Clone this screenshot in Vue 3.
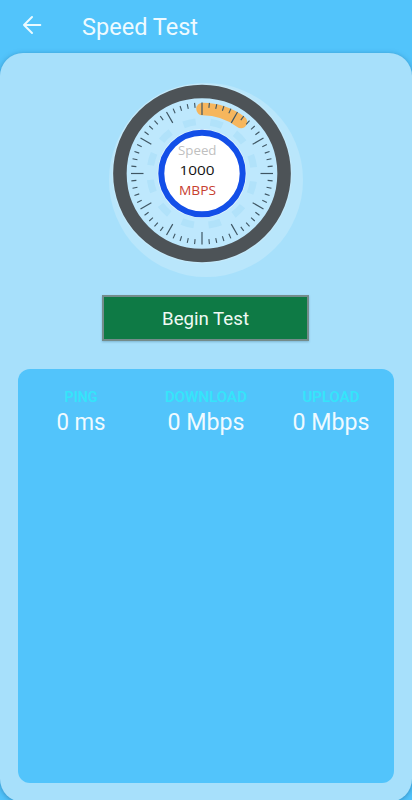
<script setup>
const ticks = Array.from({ length: 60 }, (_, i) => ({ angle: i * 6, major: i % 5 === 0 }))
const stats = [
  { label: 'PING', value: '0 ms', labelWidth: 33, valueWidth: 49 },
  { label: 'DOWNLOAD', value: '0 Mbps', labelWidth: 82, valueWidth: 77 },
  { label: 'UPLOAD', value: '0 Mbps', labelWidth: 57, valueWidth: 77 },
]
</script>

<template>
  <div class="screen">
    <header class="bar">
      <svg class="back" width="20" height="20" viewBox="0 0 20 20">
        <path d="M18.3 10H2M10 2L2 10l8 8" />
      </svg>
      <svg class="title" width="120" height="36" viewBox="0 0 120 36">
        <text x="0" y="26.3" textLength="116" lengthAdjust="spacingAndGlyphs">Speed Test</text>
      </svg>
    </header>
    <main class="card">
      <svg class="gauge" width="200" height="200" viewBox="106 80 200 200">
        <circle cx="206" cy="180" r="97" fill="#b9e6fb" />
        <circle cx="202" cy="173.5" r="90" fill="#c4e9fa" />
        <circle cx="202" cy="173.5" r="82.1" fill="#bee8fd" stroke="#4d5357" stroke-width="13.5" />
        <circle cx="202" cy="173.5" r="52" fill="none" stroke="#b1e2fa" stroke-width="7" stroke-dasharray="12.5 14.727" stroke-dashoffset="-8" />
        <path d="M202.5 109A64.5 64.5 0 0 1 241 122" fill="none" stroke="#f6b65d" stroke-width="12.5" stroke-linecap="round" />
        <line
          v-for="t in ticks"
          :key="t.angle"
          x1="202"
          x2="202"
          y1="102.5"
          :y2="t.major ? 115 : 107.5"
          :transform="`rotate(${t.angle} 202 173.5)`"
          stroke="#3f5663"
          :stroke-width="t.major ? 1.2 : 1.1"
        />
        <circle cx="202" cy="173.5" r="44.5" fill="#e4f4fd" />
        <circle cx="202" cy="173.5" r="40.7" fill="#fff" stroke="#134fe8" stroke-width="6" />
        <g class="reading">
          <text x="178" y="155" textLength="38.5" lengthAdjust="spacingAndGlyphs" fill="#bfbfbf">Speed</text>
          <text x="179.5" y="175.3" textLength="35" lengthAdjust="spacingAndGlyphs" fill="#111">1000</text>
          <text x="179" y="195" textLength="37" lengthAdjust="spacingAndGlyphs" fill="#c7402f">MBPS</text>
        </g>
      </svg>
      <button class="begin">
        <svg width="90" height="30" viewBox="0 0 90 30">
          <text x="1" y="22.3" textLength="87" lengthAdjust="spacingAndGlyphs">Begin Test</text>
        </svg>
      </button>
      <section class="panel">
        <div v-for="s in stats" :key="s.label" class="stat">
          <svg width="100" height="60" viewBox="-50 0 100 60">
            <text class="label" :x="-s.labelWidth / 2" y="23" :textLength="s.labelWidth" lengthAdjust="spacingAndGlyphs">{{ s.label }}</text>
            <text class="value" :x="-s.valueWidth / 2" y="51.2" :textLength="s.valueWidth" lengthAdjust="spacingAndGlyphs">{{ s.value }}</text>
          </svg>
        </div>
      </section>
    </main>
  </div>
</template>

<style>
body {
  margin: 0;
  overflow: hidden;
}
</style>

<style scoped>
.screen {
  display: flex;
  flex-direction: column;
  width: 412px;
  height: 800px;
  overflow: hidden;
  background: #52c4fb;
  font-family: Roboto, "Open Sans", sans-serif;
}
.bar {
  display: flex;
  flex: none;
  box-sizing: border-box;
  height: 53px;
  padding: 15px 0 0 22px;
}
.back {
  fill: none;
  stroke: #eafaff;
  stroke-width: 2;
  stroke-linecap: round;
  stroke-linejoin: round;
}
.title {
  margin: -6px 0 0 40px;
  overflow: visible;
  font-size: 24px;
  fill: #eefaff;
}
.card {
  display: flex;
  flex: none;
  flex-direction: column;
  align-items: center;
  box-sizing: border-box;
  height: 749px;
  padding-top: 27px;
  border-radius: 23px;
  background: #a7e0fb;
  box-shadow: 0 1px 5px rgba(20, 90, 140, 0.5);
}
.gauge {
  flex: none;
}
.reading {
  font-family: "Open Sans", sans-serif;
  font-size: 13px;
}
.begin {
  display: flex;
  flex: none;
  align-items: center;
  justify-content: center;
  box-sizing: border-box;
  width: 207px;
  height: 46px;
  margin-top: 15px;
  margin-right: 1px;
  padding: 0;
  border: 2px solid #748c8b;
  background: #0e7a45;
  box-shadow: 0 1px 2px rgba(50, 100, 130, 0.35);
  font-family: inherit;
  font-size: 19px;
}
.begin text {
  fill: #effaf4;
}
.panel {
  display: grid;
  flex: none;
  grid-template-columns: repeat(3, 1fr);
  justify-items: center;
  align-items: start;
  width: 376px;
  height: 414px;
  margin-top: 28px;
  border-radius: 12px;
  background: #52c4fb;
}
.stat {
  display: flex;
  padding-top: 10px;
}
.label {
  font-size: 14px;
  font-weight: 600;
  fill: #35e4fa;
}
.value {
  font-size: 23.5px;
  font-weight: 400;
  fill: #effaff;
}
</style>
